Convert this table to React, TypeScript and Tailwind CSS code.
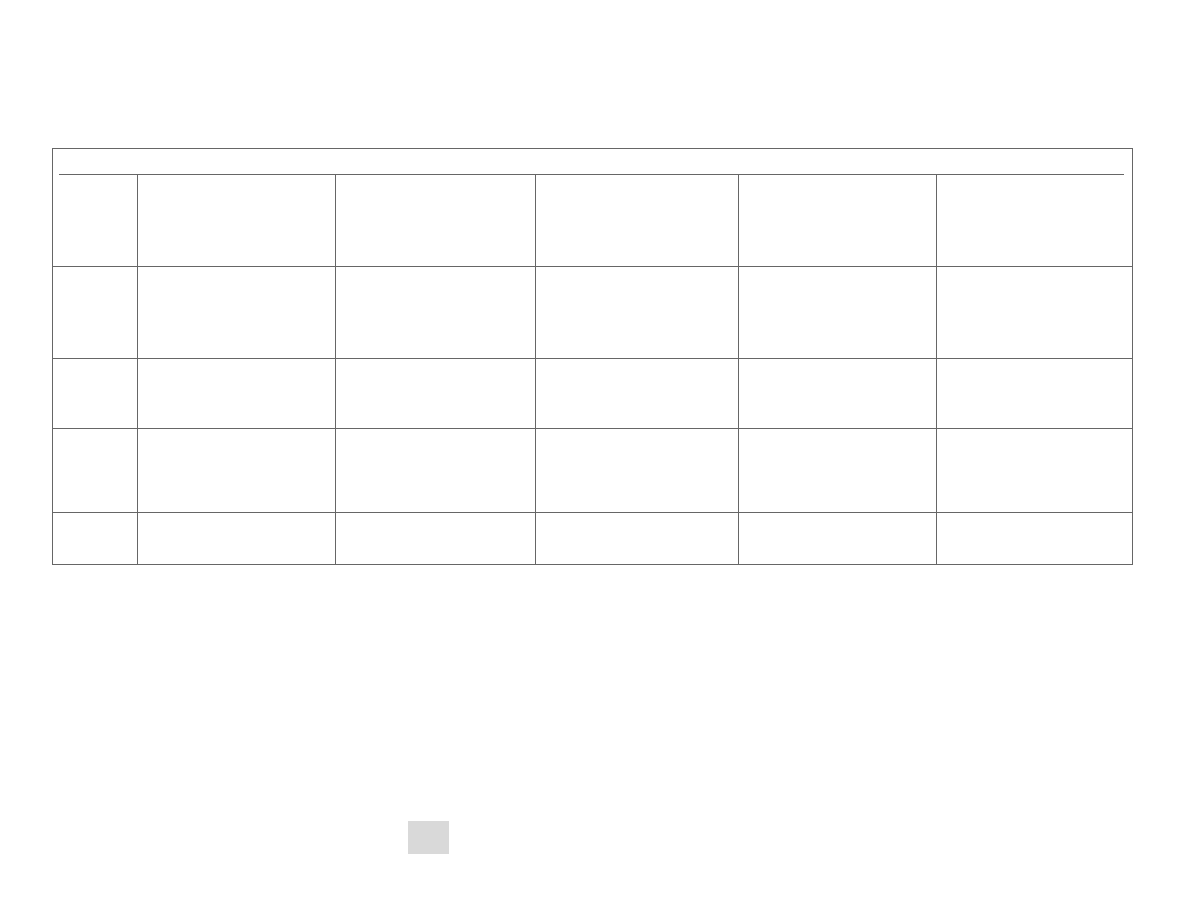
const colWidths = ["w-[85px]", "w-[198px]", "w-[200px]", "w-[203px]", "w-[198px]", "w-[195px]"];
const rowHeights = ["h-[92px]", "h-[92px]", "h-[70px]", "h-[84px]", "h-[51px]"];

export default function App() {
  return (
    <div className="min-h-[918px] w-[1188px] bg-white pt-[148px]">
      <div className="ml-[52px] w-[1081px] border border-[#666666]">
        {/* caption strip */}
        <div className="h-[25px]" />
        <div className="ml-[6px] mr-[8px] h-px bg-[#666666]" />
        {/* grid */}
        <div>
          {rowHeights.map((h, r) => (
            <div key={r} className={`flex ${h} ${r < rowHeights.length - 1 ? "border-b border-[#666666]" : ""}`}>
              {colWidths.map((w, c) => (
                <div
                  key={c}
                  className={`${w} shrink-0 ${c < colWidths.length - 1 ? "border-r border-[#666666]" : ""}`}
                />
              ))}
            </div>
          ))}
        </div>
      </div>
      <div className="ml-[408px] mt-[256px] h-[33px] w-[41px] bg-[#d9d9d9]" />
    </div>
  );
}
